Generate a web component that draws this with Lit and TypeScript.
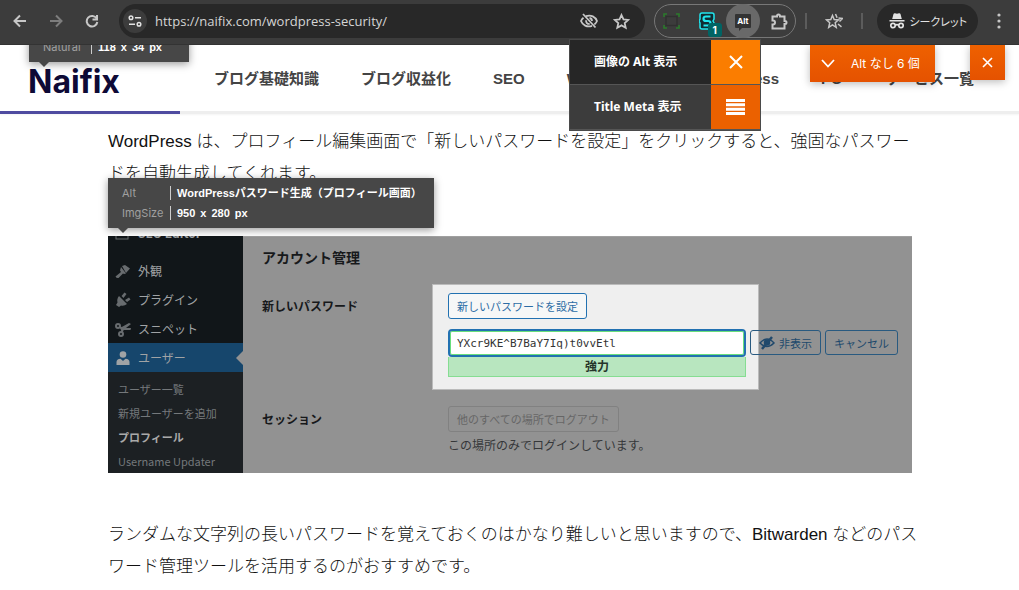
import { LitElement, html, css, svg } from "lit";
import { customElement, property } from "lit/decorators.js";

const reset = css`
  *, *::before, *::after { box-sizing: border-box; }
  button { font: inherit; color: inherit; background: none; border: 0; padding: 0; margin: 0; cursor: pointer; }
  a { color: inherit; text-decoration: none; }
  svg { display: block; flex: none; }
`;

@customElement("browser-bar")
class BrowserBar extends LitElement {
  static styles = [reset, css`
    :host { display: block; position: relative; z-index: 5; background: #3c3c3c; color: #c7c7c7; }
    .bar { display: flex; align-items: center; height: 45px; padding: 0 1px 2px 2px; border-bottom: 1px solid #333; }
    .tool { display: grid; place-items: center; width: 36px; height: 34px; flex: none; }
    .off { color: #7d7d7d; }
    .address { flex: 1; display: flex; align-items: center; min-width: 0; height: 34px; margin-left: 9px; padding: 0 8px 0 4px; border-radius: 17px; background: #282828; }
    .site { display: grid; place-items: center; width: 24px; height: 24px; flex: none; border-radius: 50%; background: #3c3c3c; color: #e3e3e3; }
    .url { flex: 1; min-width: 0; margin: 0 0 0 8px; padding: 0; border: 0; outline: 0; background: none; color: #d5d5d5; font: 13px "Open Sans", "Noto Sans", sans-serif; }
    .mini { display: grid; place-items: center; width: 32px; height: 34px; flex: none; }
    .extensions { display: flex; align-items: center; justify-content: space-between; width: 142px; height: 34px; margin-left: 9px; border: 1px solid #777; border-radius: 17px; flex: none; }
    .ext { display: grid; place-items: center; width: 32px; height: 32px; position: relative; }
    .active { width: 34px; height: 34px; border-radius: 50%; background: #696969; }
    .badge { position: absolute; right: 1px; bottom: 0; width: 14px; height: 14px; border-radius: 3px; background: #006464; color: #fff; font: bold 10px/14px Inter, sans-serif; text-align: center; }
    .alt { display: grid; place-items: center; position: relative; width: 16px; height: 14px; border-radius: 1px; background: #333; color: #fff; font: bold 8px/14px Inter, sans-serif; }
    .alt::after { content: ""; position: absolute; left: 4px; top: 13px; border: 2px solid transparent; border-top-color: #333; border-left-color: #333; }
    .sep { width: 2px; height: 16px; background: #5c5c5c; flex: none; }
    .first { margin-left: 9px; }
    .saved { width: 54px; }
    .incognito { display: flex; align-items: center; gap: 4px; height: 34px; margin-left: 14px; padding: 0 11px 0 12px; border-radius: 17px; background: #282828; color: #e3e3e3; font: 11px "Noto Sans CJK JP", sans-serif; font-feature-settings: "palt"; flex: none; }
    .menu { width: 38px; margin-left: 2px; }
  `];
  render() {
    return html`<div class="bar">
      <button class="tool" aria-label="戻る"><svg width="14" height="14" viewBox="0 0 14 14" fill="none" stroke="currentColor" stroke-width="2"><path d="M13 7H2M7 1.5 1.5 7 7 12.5"/></svg></button>
      <button class="tool off" aria-label="進む"><svg width="14" height="14" viewBox="0 0 14 14" fill="none" stroke="currentColor" stroke-width="2"><path d="M1 7h11M7 1.5 12.500 7 7 12.500"/></svg></button>
      <button class="tool" aria-label="再読み込み"><svg width="14" height="14" viewBox="0 0 14 14" fill="none" stroke="currentColor" stroke-width="2"><path d="M11.600 4.500A5.300 5.300 0 1 0 12.300 8"/><path d="M12 1v4.500H7.500"/></svg></button>
      <div class="address">
        <button class="site" aria-label="サイト情報"><svg width="14" height="12" viewBox="0 0 14 12" fill="none" stroke="currentColor" stroke-width="1.500"><circle cx="3" cy="2.800" r="1.800"/><path d="M7 2.800h6M1 9.200h6"/><circle cx="11" cy="9.200" r="1.800"/></svg></button>
        <input class="url" aria-label="アドレス" value="https://naifix.com/wordpress-security/">
        <button class="mini" aria-label="トラッキング防止"><svg width="18" height="16" viewBox="0 0 18 16" fill="none" stroke="currentColor" stroke-width="1.800"><path d="M3 1l12.500 13.500M6 3.200C11 1.300 15.500 4 17 8c-.6 1.500-1.500 2.600-2.600 3.400M12 12.800C7 14.700 2.500 12 1 8c.6-1.400 1.400-2.500 2.500-3.300"/><path d="M9.500 5a3 3 0 0 1 2.500 3M6.200 7.200a3 3 0 0 0 3.500 3.700"/></svg></button>
        <button class="mini" aria-label="ブックマークに追加"><svg width="17" height="17" viewBox="0 0 17 17" fill="none" stroke="currentColor" stroke-width="1.800"><path d="M8.500 2l2 4.400 4.800.5-3.600 3.200 1 4.700-4.200-2.400-4.200 2.400 1-4.700L1.700 6.900l4.800-.5z"/></svg></button>
      </div>
      <div class="extensions">
        <button class="ext" aria-label="キャプチャ"><svg width="17" height="16" viewBox="0 0 17 16" fill="none"><rect x="3" y="3.500" width="11" height="9" stroke="#303030" stroke-width="1.500"/><path d="M1 4V1h3M13 1h3v3M16 12v3h-3M4 15H1v-3" stroke="#2b7a2b" stroke-width="1.600"/></svg></button>
        <button class="ext" aria-label="スタイル"><svg width="16" height="18" viewBox="0 0 16 18" fill="none" stroke="#20e5ee" stroke-width="1.500"><path fill="#102c32" d="M3 1h10q2 0 2 2v4l-1 2 1 2v4q0 2-2 2H3q-2 0-2-2v-4L0 9l1-2V3q0-2 2-2z"/><path stroke-width="2.200" d="M11.500 4.500H7q-2.500 0-2.500 2.200T7 9h2q2.500 0 2.500 2.200T9 13.500H4.500"/></svg><span class="badge">1</span></button>
        <button class="ext active" aria-label="Alt 表示"><span class="alt">Alt</span></button>
        <button class="ext" aria-label="拡張機能"><svg width="17" height="17" viewBox="0 0 17 17" fill="none" stroke="currentColor" stroke-width="2"><path d="M1.500 3.500H6V3a1.500 1.500 0 0 1 3 0v.5h4.500V8H14a1.500 1.500 0 0 1 0 3h-.5v4.500h-12v-4H2a2 2 0 0 0 0-4h-.5z"/></svg></button>
      </div>
      <span class="sep first"></span>
      <button class="tool saved" aria-label="ブックマーク"><svg width="18" height="17" viewBox="0 0 18 17" fill="none" stroke="currentColor" stroke-width="1.500"><path d="M7.500 2.500l1.700 4 4.300.4-3.300 2.900 1 4.500-3.700-2.400-3.800 2.400 1-4.500L1.500 6.900l4.300-.4zM10.500 1l1.600 3.700M13.500 5l4 .5-3 3M13 11l3.500 2.800"/></svg></button>
      <span class="sep"></span>
      <button class="incognito"><svg width="16" height="16" viewBox="0 0 16 16" fill="currentColor"><path d="M4.500 1q.4-1 1.500-.8l2 .5 2-.5q1.100-.2 1.500.8l1.300 5H3.200zM.5 7h15v1.500H.5z"/><g fill="none" stroke="currentColor" stroke-width="1.700"><circle cx="4" cy="12.500" r="2.200"/><circle cx="12" cy="12.500" r="2.200"/><path d="M6 12.200q2-1.200 4 0"/></g></svg><span>シークレット</span></button>
      <button class="tool menu" aria-label="メニュー"><svg width="4" height="16" viewBox="0 0 4 16" fill="currentColor"><circle cx="2" cy="2" r="1.600"/><circle cx="2" cy="8" r="1.600"/><circle cx="2" cy="14" r="1.600"/></svg></button>
    </div>`;
  }
}

@customElement("site-header")
class SiteHeader extends LitElement {
  @property({ type: Number }) progress = 0;
  static styles = [reset, css`
    :host { display: block; background: #fff; }
    .head { display: flex; align-items: center; height: 66px; padding: 2px 28px 0; }
    .logo { flex: none; width: 186px; padding-top: 6px; color: #0e0a36; font: bold 32px/40px Inter, sans-serif; }
    .nav { display: flex; gap: 42px; color: #444; font: bold 15px/22px "Liberation Sans", "Noto Sans CJK JP", sans-serif; white-space: nowrap; }
    .track { height: 3px; background: #eee; box-shadow: 0 1px 2px #f4f4f4; }
    .read { height: 3px; background: #4f4ba0; }
  `];
  render() {
    const items = ["ブログ基礎知識", "ブログ収益化", "SEO", "Webデザイン", "WordPress", "PC", "サービス一覧"];
    return html`<header>
      <div class="head"><a class="logo" href="#">Naifix</a>
        <nav class="nav">${items.map((i) => html`<a href="#">${i}</a>`)}</nav></div>
      <div class="track"><div class="read" style="width:${this.progress}%"></div></div>
    </header>`;
  }
}

@customElement("image-tip")
class ImageTip extends LitElement {
  @property({ attribute: false }) rows: [string, string[]][] = [];
  static styles = [reset, css`
    :host { display: block; position: absolute; z-index: 2; padding: 5px 14px; background: #474747; box-shadow: 0 2px 8px #0006; color: #fff; font: 11px/20px Inter, "Noto Sans CJK JP", sans-serif; white-space: nowrap; }
    :host::after { content: ""; position: absolute; left: 10px; top: 100%; border: 5px solid transparent; border-top-color: #474747; border-bottom: 0; }
    .row { display: flex; align-items: center; height: 20px; }
    .key { flex: none; width: 48px; color: #a0a0a0; }
    .value { display: flex; gap: 5px; padding-left: 6px; border-left: 1px solid #ccc; font: bold 11px/14px "Liberation Sans", "Noto Sans CJK JP", sans-serif; }
  `];
  render() {
    return this.rows.map(([k, v]) => html`<div class="row"><span class="key">${k}</span><span class="value">${v.map((p) => html`<span>${p}</span> `)}</span></div>`);
  }
}

const menuIcons = {
  brush: svg`<path d="M7 3l3-1 5 3.500-4 4.500zM6 4l5 6.500-2 .5-1-.5L3.500 15q-2 .5-3-1.500L6 9l-1-1.500z"/>`,
  plug: svg`<path d="M4 4l8 8q-3 2.500-6 1.500L4 15l-3-2 1.500-2.500Q1.500 7 4 4zM6.500 4l3-3.500L11.500 2l-3 4zM10 8l4-2.500 1.500 2L12 10z"/>`,
  scissors: svg`<path d="M5 7l9-5 2 1-5 4h5l-.5 2H8l-1.500 1z"/><g fill="none" stroke="currentColor" stroke-width="2"><circle cx="3" cy="5" r="2"/><circle cx="6" cy="13" r="2"/><path d="M5 6l3 2-1.500 3.500"/></g>`,
  user: svg`<circle cx="8" cy="4.500" r="3.300"/><path d="M1.500 15v-3q0-3 4-3.300L8 11l2.500-2.300q4 .3 4 3.300v3z"/>`,
};

@customElement("profile-figure")
class ProfileFigure extends LitElement {
  static styles = [reset, css`
    :host { display: block; font: 12px/18px "Noto Sans CJK JP", sans-serif; }
    .shot { display: flex; height: 237px; overflow: hidden; background: #929292; }
    .side { width: 135px; flex: none; background: #111619; color: #a0a3a5; }
    .menu { margin-top: -18px; }
    .item { display: flex; align-items: center; gap: 7px; height: 29px; padding-left: 7px; }
    .item svg { color: #686c6f; }
    .seo { margin-bottom: 9px; font-weight: bold; }
    .current { position: relative; background: #16466c; }
    .current svg { color: #a0a3a5; }
    .current::after { content: ""; position: absolute; right: 0; top: 8px; border: 7px solid transparent; border-right-color: #929292; border-left: 0; }
    .sub { padding: 5px 10px 0; background: #1c2023; color: #74787b; font-size: 11px; line-height: 24px; }
    .sub a { display: block; }
    .sub .here { color: #a9a9a9; font-weight: bold; }
    .main { flex: 1; position: relative; padding: 10px 14px 0 19px; color: #17191b; white-space: nowrap; border-top: 1px solid #a0a0a0; }
    .title { margin: 0 0 26px; font: bold 14px/20px "Noto Sans CJK JP", sans-serif; }
    .spot { position: absolute; left: 189px; top: 47px; width: 327px; height: 106px; border: 1px solid #bbb; background: #efefef; }
    .field { display: flex; position: relative; }
    .label { width: 186px; flex: none; padding-top: 4px; font-weight: bold; }
    .btn { display: inline-flex; align-items: center; height: 26px; padding: 0 8px; border: 1px solid #2271b1; border-radius: 3px; background: #f6f7f7; color: #2c6ca5; font-size: 11px; }
    .line { display: flex; align-items: flex-start; gap: 4px; margin-top: 10px; }
    .entry { width: 298px; }
    .pass { display: block; width: 298px; height: 28px; padding: 0 7px; border: 2px solid #2271b1; border-radius: 4px; outline: 0; background: #fff; color: #333; font: 11px "DejaVu Sans Mono", monospace; box-shadow: inset 0 0 0 1px #68de7c; }
    .strength { height: 20px; border: 1px solid #86dd92; border-top: 0; background: #b8e6bf; color: #26352a; font-weight: bold; text-align: center; }
    .dim { height: 25px; margin-top: 1px; padding: 0 8px; gap: 4px; border-color: #295a80; background: transparent; color: #20496c; }
    .sessions { margin-top: 29px; }
    .out { height: 26px; border-color: #818181; background: transparent; color: #666; }
    .note { margin: 4px 0 0; color: #353739; }
  `];
  render() {
    const item = (icon: unknown, text: string, extra = "") => html`<a href="#" class="item ${extra}"><svg width="16" height="16" viewBox="0 0 16 16" fill="currentColor">${icon}</svg><span>${text}</span></a>`;
    return html`<div class="shot">
      <aside class="side"><nav class="menu">
        ${item(svg`<rect x="1" y="2" width="12" height="12" fill="none" stroke="currentColor"/>`, "SEO Editor", "seo")}
        ${item(menuIcons.brush, "外観")}
        ${item(menuIcons.plug, "プラグイン")}
        ${item(menuIcons.scissors, "スニペット")}
        ${item(menuIcons.user, "ユーザー", "current")}
        <div class="sub"><a href="#">ユーザー一覧</a><a href="#">新規ユーザーを追加</a><a href="#" class="here">プロフィール</a><a href="#">Username Updater</a></div>
      </nav></aside>
      <section class="main">
        <div class="spot"></div>
        <h2 class="title">アカウント管理</h2>
        <div class="field">
          <label class="label" for="pass">新しいパスワード</label>
          <div>
            <button class="btn">新しいパスワードを設定</button>
            <div class="line">
              <div class="entry"><input id="pass" class="pass" value="YXcr9KE^B7BaY7Iq)t0vvEtl"><div class="strength">強力</div></div>
              <button class="btn dim"><svg width="16" height="14" viewBox="0 0 16 14" fill="none" stroke="currentColor" stroke-width="1.500"><path d="M1 7q7-8 14 0-7 7-14 0z"/><circle cx="8" cy="6.500" r="2.500" fill="currentColor"/><path stroke-width="2.500" d="M3 13L13 1"/></svg>非表示</button>
              <button class="btn dim">キャンセル</button>
            </div>
          </div>
        </div>
        <div class="field sessions">
          <span class="label">セッション</span>
          <div><button class="btn out" disabled>他のすべての場所でログアウト</button><p class="note">この場所のみでログインしています。</p></div>
        </div>
      </section>
    </div>`;
  }
}

@customElement("app-root")
class AppRoot extends LitElement {
  static styles = [reset, css`
    :host { display: block; position: relative; min-height: 100vh; background: #fff; color: #111; font-family: "Liberation Sans", "Noto Sans CJK JP", sans-serif; }
    .page { position: relative; overflow: hidden; }
    .article { margin: 0 107px 0 108px; padding-top: 12px; }
    .text { margin: 0; font-size: 17px; line-height: 32px; font-weight: 300; white-space: nowrap; }
    .figure { position: relative; margin: 46px 0; }
    .logo-tip { left: 29px; top: -13px; width: 160px; }
    .photo-tip { left: 0; top: -58px; width: 326px; }
    .popup { position: absolute; z-index: 6; left: 569px; top: 39px; width: 192px; border: 1px solid #4a4a4a; background: #3c3c3c; color: #fff; font: bold 12px/18px "Noto Sans", "Noto Sans CJK JP", sans-serif; text-shadow: 1px 1px 1px #000; }
    .option { display: flex; width: 100%; height: 45px; align-items: stretch; text-align: left; border-bottom: 1px solid #555; }
    .name { flex: 1; display: flex; align-items: center; padding-left: 24px; }
    .mark { display: grid; place-items: center; width: 49px; background: #eb6100; }
    .on { background: #262626; }
    .on .mark { background: #fb7d00; }
    .count, .close { position: absolute; z-index: 3; top: 0; display: flex; align-items: center; color: #fff; background: linear-gradient(#ef6100, #e55200); box-shadow: 0 2px 8px #0004; font: 12px/18px Inter, "Noto Sans CJK JP", sans-serif; }
    .count { right: 84px; width: 125px; height: 37px; padding-left: 11px; gap: 16px; }
    .close { right: 14px; width: 35px; height: 35px; justify-content: center; }
  `];
  render() {
    const cross = html`<svg width="14" height="14" viewBox="0 0 14 14" stroke="#fff" stroke-width="2"><path d="M1 1l12 12M13 1L1 13"/></svg>`;
    return html`
      <browser-bar></browser-bar>
      <div class="popup">
        <button class="option on"><span class="name">画像の Alt 表示</span><span class="mark">${cross}</span></button>
        <button class="option"><span class="name">Title Meta 表示</span><span class="mark"><svg width="19" height="16" viewBox="0 0 19 16" stroke="#fff" stroke-width="3"><path d="M0 1.500h19M0 5.800h19M0 10.200h19M0 14.500h19"/></svg></span></button>
      </div>
      <div class="page">
        <site-header .progress=${17.66}></site-header>
        <image-tip class="logo-tip" .rows=${[["Natural", ["118", "x", "34", "px"]]]}></image-tip>
        <button class="count"><svg width="14" height="9" viewBox="0 0 14 9" fill="none" stroke="#fff" stroke-width="1.800"><path d="M1 1l6 6.500L13 1"/></svg><span>Alt なし 6 個</span></button>
        <button class="close" aria-label="閉じる"><svg width="11" height="11" viewBox="0 0 11 11" stroke="#fff" stroke-width="1.600"><path d="M1 1l9 9M10 1l-9 9"/></svg></button>
        <main class="article">
          <p class="text">WordPress は、プロフィール編集画面で「新しいパスワードを設定」をクリックすると、強固なパスワー<br>ドを自動生成してくれます。</p>
          <div class="figure">
            <image-tip class="photo-tip" .rows=${[["Alt", ["WordPressパスワード生成（プロフィール画面）"]], ["ImgSize", ["950", "x", "280", "px"]]]}></image-tip>
            <profile-figure></profile-figure>
          </div>
          <p class="text">ランダムな文字列の長いパスワードを覚えておくのはかなり難しいと思いますので、Bitwarden などのパス<br>ワード管理ツールを活用するのがおすすめです。</p>
        </main>
      </div>`;
  }
}
